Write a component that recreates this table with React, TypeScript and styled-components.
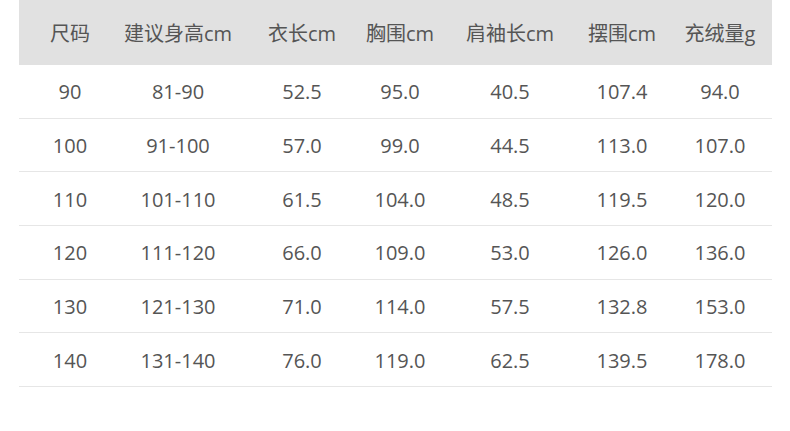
import React from 'react';
import styled, { createGlobalStyle } from 'styled-components';

const GlobalStyle = createGlobalStyle`
  html, body {
    margin: 0;
    padding: 0;
    background: #ffffff;
  }
  body {
    font-family: "Open Sans", "Noto Sans CJK SC", sans-serif;
  }
`;

// width of each column and how far its text sits off the column centre
const columns = [
  { width: 105, shift: -1.5 },
  { width: 116, shift: -4 },
  { width: 111, shift: 6.5 },
  { width: 104, shift: -3 },
  { width: 111, shift: -0.5 },
  { width: 105, shift: 3.5 },
  { width: 101, shift: -1.5 },
];

const headers = ['尺码', '建议身高cm', '衣长cm', '胸围cm', '肩袖长cm', '摆围cm', '充绒量g'];

const rows = [
  ['90', '81-90', '52.5', '95.0', '40.5', '107.4', '94.0'],
  ['100', '91-100', '57.0', '99.0', '44.5', '113.0', '107.0'],
  ['110', '101-110', '61.5', '104.0', '48.5', '119.5', '120.0'],
  ['120', '111-120', '66.0', '109.0', '53.0', '126.0', '136.0'],
  ['130', '121-130', '71.0', '114.0', '57.5', '132.8', '153.0'],
  ['140', '131-140', '76.0', '119.0', '62.5', '139.5', '178.0'],
];

const Page = styled.div`
  width: 790px;
  height: 431px;
  padding: 0 18px 0 19px;
  box-sizing: border-box;
`;

const Table = styled.div`
  display: grid;
  grid-template-columns: ${columns.map((c) => `${c.width}px`).join(' ')};
  width: 753px;
`;

const Row = styled.div<{ $head?: boolean }>`
  display: contents;
`;

const Cell = styled.div<{ $head?: boolean; $shift: number }>`
  display: flex;
  align-items: center;
  justify-content: center;
  box-sizing: border-box;
  height: ${(p) => (p.$head ? '65px' : '53.67px')};
  padding-left: ${(p) => Math.max(0, p.$shift * 2)}px;
  padding-right: ${(p) => Math.max(0, -p.$shift * 2)}px;
  background: ${(p) => (p.$head ? '#e1e1e1' : '#ffffff')};
  border-bottom: ${(p) => (p.$head ? 'none' : '1px solid #e6e6e6')};
  color: #555555;
  font-size: 20px;
  white-space: nowrap;
  padding-top: ${(p) => (p.$head ? '0' : '1px')};
`;

export default function App() {
  return (
    <>
      <GlobalStyle />
      <Page>
        <Table>
          <Row $head>
            {headers.map((h, i) => (
              <Cell key={h} $head $shift={columns[i].shift}>
                {h}
              </Cell>
            ))}
          </Row>
          {rows.map((r) => (
            <Row key={r[0]}>
              {r.map((v, i) => (
                <Cell key={i} $shift={columns[i].shift}>
                  {v}
                </Cell>
              ))}
            </Row>
          ))}
        </Table>
      </Page>
    </>
  );
}
